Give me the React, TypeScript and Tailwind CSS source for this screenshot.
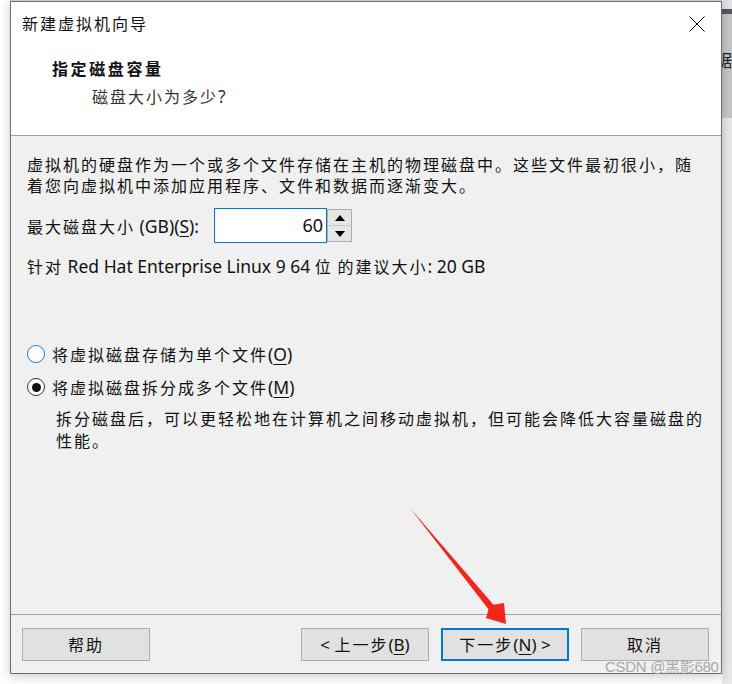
import React from "react";

const Z = ({ children }: { children: React.ReactNode }) => (
  <span className="text-[16px] tracking-[2px]">{children}</span>
);

const U = ({ children }: { children: React.ReactNode }) => (
  <span className="underline underline-offset-[3px] decoration-1">{children}</span>
);

function Btn({
  children,
  primary,
}: {
  children: React.ReactNode;
  primary?: boolean;
}) {
  return (
    <div
      className={
        "w-[128px] h-[33px] flex items-center justify-center bg-[#e1e1e1] text-[17px] leading-[22px] text-[#111] " +
        (primary ? "border-2 border-[#0078d7]" : "border border-[#adadad]")
      }
    >
      <span className="whitespace-pre">{children}</span>
    </div>
  );
}

export default function App() {
  return (
    <div className="w-[732px] h-[684px] flex bg-white overflow-hidden relative font-['Noto_Sans','Noto_Sans_CJK_SC',sans-serif] text-[#111]">
      {/* left desktop margin */}
      <div className="w-[10px] shrink-0 bg-white" />

      {/* dialog column */}
      <div className="w-[712px] shrink-0 flex flex-col">
        <div className="h-[1px] bg-[#d8d8d8]" />
        <div className="h-[673px] border border-[#6f6f6f] flex flex-col shadow-[0_2px_10px_rgba(0,0,0,0.22)] relative z-10">
          {/* header */}
          <div className="h-[134px] bg-white border-b border-[#a0a0a0] flex flex-col">
            <div className="h-[43px] pl-[11px] pr-[16px] flex items-center justify-between">
              <span className="leading-[22px]">
                <Z>新建虚拟机向导</Z>
              </span>
              <svg width="16" height="16" viewBox="0 0 16 16">
                <path d="M0.5 0.5 L15.5 15.5 M15.5 0.5 L0.5 15.5" stroke="#000" strokeWidth="1" fill="none" />
              </svg>
            </div>
            <div className="mt-[13px] pl-[41px] h-[22px] leading-[22px] text-[16px] font-bold">
              <span className="tracking-[2.6px]">指定磁盘容量</span>
            </div>
            <div className="mt-[5px] pl-[81px] h-[22px] flex items-center text-[17.5px] text-[#333]">
              <span className="leading-[22px]">
                <Z>磁盘大小为多少</Z>?
              </span>
            </div>
          </div>

          {/* body */}
          <div className="flex-1 bg-[#f0f0f0] pl-[16px] pt-[19px] flex flex-col text-[17.5px]">
            <div className="leading-[21px] text-[16px]">
              <Z>虚拟机的硬盘作为一个或多个文件存储在主机的物理磁盘中。这些文件最初很小，随</Z>
              <br />
              <Z>着您向虚拟机中添加应用程序、文件和数据而逐渐变大。</Z>
            </div>

            <div className="mt-[11px] h-[35px] flex items-center">
              <div className="w-[187px] leading-[22px] pt-[2px]">
                <Z>最大磁盘大小</Z> (GB)(<U>S</U>):
              </div>
              <div className="w-[113px] h-[35px] border border-[#0078d7] bg-white flex items-center justify-end pr-[3px] text-[18px]">
                60
              </div>
              <div className="w-[25px] h-[33px] border border-[#adadad] bg-[#f0f0f0] flex flex-col">
                <div className="flex-1 flex items-center justify-center border-b border-[#c8c8c8] bg-[#e6e6e6]">
                  <svg width="10" height="6" viewBox="0 0 10 6">
                    <path d="M5 0 L10 6 L0 6 Z" fill="#000" />
                  </svg>
                </div>
                <div className="flex-1 flex items-center justify-center bg-[#e6e6e6]">
                  <svg width="10" height="6" viewBox="0 0 10 6">
                    <path d="M0 0 L10 0 L5 6 Z" fill="#000" />
                  </svg>
                </div>
              </div>
            </div>

            <div className="mt-[13px] h-[21px] flex items-center">
              <span className="leading-[21px]">
                <Z>针对</Z> Red Hat Enterprise Linux 9 64 <Z>位</Z> <Z>的建议大小</Z>: 20 GB
              </span>
            </div>

            <div className="mt-[66px] h-[22px] flex items-center gap-[7px]">
              <div className="w-[18px] h-[18px] rounded-full border border-[#1a7fd8] bg-white" />
              <div className="leading-[22px]">
                <Z>将虚拟磁盘存储为单个文件</Z>(<U>O</U>)
              </div>
            </div>

            <div className="mt-[11px] h-[22px] flex items-center gap-[7px]">
              <div className="w-[18px] h-[18px] rounded-full border border-[#333] bg-white flex items-center justify-center">
                <div className="w-[9px] h-[9px] rounded-full bg-[#111]" />
              </div>
              <div className="leading-[22px]">
                <Z>将虚拟磁盘拆分成多个文件</Z>(<U>M</U>)
              </div>
            </div>

            <div className="mt-[10px] pl-[29px] leading-[22px] text-[16px]">
              <Z>拆分磁盘后，可以更轻松地在计算机之间移动虚拟机，但可能会降低大容量磁盘的</Z>
              <br />
              <Z>性能。</Z>
            </div>
          </div>

          {/* footer */}
          <div className="h-[59px] border-t border-[#a0a0a0] bg-[#f0f0f0] pt-[13px] pl-[11px] pr-[12px] flex justify-between items-start">
            <Btn>
              <Z>帮助</Z>
            </Btn>
            <div className="flex gap-[12px]">
              <Btn>
                {"< "}
                <Z>上一步</Z>(<U>B</U>)
              </Btn>
              <Btn primary>
                <Z>下一步</Z>(<U>N</U>){" >"}
              </Btn>
              <Btn>
                <Z>取消</Z>
              </Btn>
            </div>
          </div>
        </div>
        <div className="flex-1 bg-white" />
      </div>

      {/* right desktop strip */}
      <div className="w-[10px] shrink-0 flex flex-col">
        <div className="h-[9px] bg-[#e2e2e2]" />
        <div className="h-[5px] bg-[#505862]" />
        <div className="h-[104px] bg-[#c6c6c6] overflow-hidden flex flex-col">
          <div className="mt-[37px] text-[17px] leading-[20px] text-[#222] -ml-[1px]">剧</div>
        </div>
        <div className="flex-1 bg-[#e8e8e8]" />
      </div>

      {/* watermark */}
      <div className="absolute left-[605px] top-[657px] z-20 text-[15px] leading-[20px] tracking-[-0.3px] text-[#a8a8a8] font-['Liberation_Sans','Noto_Sans_CJK_SC',sans-serif]">
        CSDN @黑影680
      </div>

      {/* red arrow annotation */}
      <svg
        className="absolute left-0 top-0 z-30 pointer-events-none"
        width="732"
        height="684"
        viewBox="0 0 732 684"
      >
        <polygon
          points="410,508 493.5,604.8 504,603 506,624 486,618 488.5,609.2"
          fill="#f4261c"
        />
      </svg>
    </div>
  );
}
